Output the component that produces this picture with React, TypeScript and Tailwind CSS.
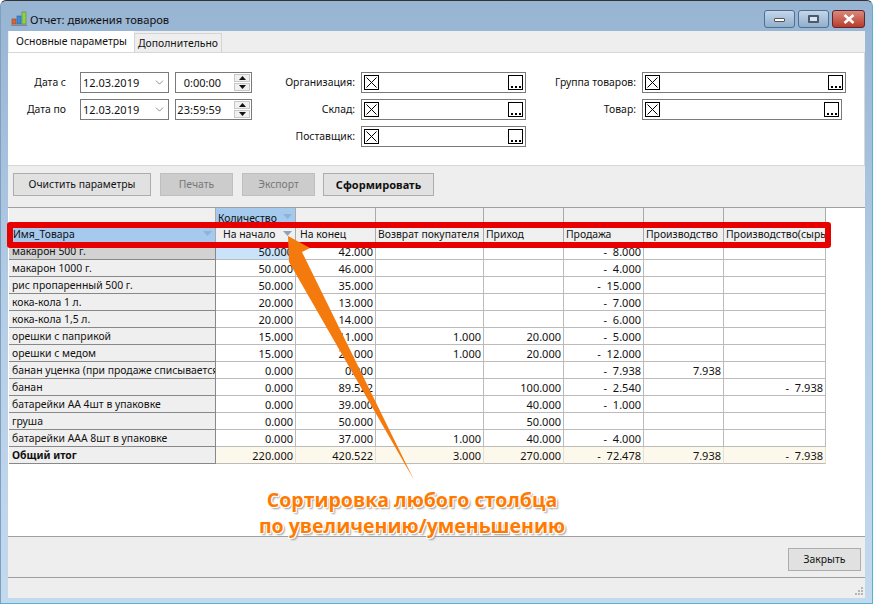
import { ChevronDown } from "lucide-react";

const widths = ["w-[207px]", "w-[80px]", "w-[80px]", "w-[108px]", "w-[80px]", "w-[80px]", "w-[80px]", "w-[102px]"];

const headers = [
  { text: "На начало", pad: "pl-[7px]" },
  { text: "На конец", pad: "pl-[4px]" },
  { text: "Возврат покупателя", pad: "pl-[2px]" },
  { text: "Приход", pad: "pl-[2px]" },
  { text: "Продажа", pad: "pl-[2px]" },
  { text: "Производство", pad: "pl-[2px]" },
  { text: "Производство(сырье)", pad: "pl-[2px]" },
];

const rows = [
  ["макарон 500 г.", "50.000", "42.000", "", "", "-  8.000", "", ""],
  ["макарон 1000 г.", "50.000", "46.000", "", "", "-  4.000", "", ""],
  ["рис пропаренный 500 г.", "50.000", "35.000", "", "", "-  15.000", "", ""],
  ["кока-кола 1 л.", "20.000", "13.000", "", "", "-  7.000", "", ""],
  ["кока-кола 1,5 л.", "20.000", "14.000", "", "", "-  6.000", "", ""],
  ["орешки с паприкой", "15.000", "11.000", "1.000", "20.000", "-  5.000", "", ""],
  ["орешки с медом", "15.000", "24.000", "1.000", "20.000", "-  12.000", "", ""],
  ["банан уценка (при продаже списывается)", "0.000", "0.000", "", "", "-  7.938", "7.938", ""],
  ["банан", "0.000", "89.522", "", "100.000", "-  2.540", "", "-  7.938"],
  ["батарейки АА 4шт в упаковке", "0.000", "39.000", "", "40.000", "-  1.000", "", ""],
  ["груша", "0.000", "50.000", "", "50.000", "", "", ""],
  ["батарейки ААА 8шт в упаковке", "0.000", "37.000", "1.000", "40.000", "-  4.000", "", ""],
];

const total = ["Общий итог", "220.000", "420.522", "3.000", "270.000", "-  72.478", "7.938", "-  7.938"];

function Lookup({ className }: { className: string }) {
  return (
    <div className={`flex h-[21px] items-center justify-between border border-[#7a7a7a] bg-white pl-[2px] pr-[2px] ${className}`}>
      <div className="h-[15px] w-[15px] border border-black">
        <svg viewBox="0 0 13 13" className="h-[13px] w-[13px]">
          <path d="M1.5 1.5L11.5 11.5M11.5 1.5L1.5 11.5" stroke="#000" strokeWidth="1" fill="none" />
        </svg>
      </div>
      <div className="relative h-[15px] w-[15px] border border-black">
        <div className="absolute bottom-[1px] left-[2px] flex gap-[2px]">
          <span className="h-[2px] w-[2px] bg-black" />
          <span className="h-[2px] w-[2px] bg-black" />
          <span className="h-[2px] w-[2px] bg-black" />
        </div>
      </div>
    </div>
  );
}

function DateBox({ value }: { value: string }) {
  return (
    <div className="flex h-[21px] w-[89px] items-center justify-between border border-[#7a7a7a] bg-white pl-[2px] pr-[2px] text-[11px]">
      <span>{value}</span>
      <ChevronDown size={13} strokeWidth={1} color="#333" />
    </div>
  );
}

function TimeBox({ value }: { value: string }) {
  return (
    <div className="flex h-[21px] w-[77px] items-center justify-between border border-[#7a7a7a] bg-white pr-[1px] text-[11px]">
      <span className="flex-1 pr-[13px] text-right">{value}</span>
      <div className="flex flex-col gap-[1px]">
        {["M0 4L3.5 0L7 4Z", "M0 0L7 0L3.5 4Z"].map((d) => (
          <div key={d} className="flex h-[8px] w-[16px] items-center justify-center border border-[#c8c8c8] bg-[#f0f0f0]">
            <svg width="7" height="4" viewBox="0 0 7 4">
              <path d={d} fill="#111" />
            </svg>
          </div>
        ))}
      </div>
    </div>
  );
}

function Label({ text, className }: { text: string; className: string }) {
  return <span className={`whitespace-nowrap text-right ${className}`}>{text}</span>;
}

function SortMark({ dark }: { dark?: boolean }) {
  return (
    <svg width="9" height="5" viewBox="0 0 9 5" className="absolute right-[3px] top-[6px]">
      <path d="M0 0L9 0L4.5 5Z" fill={dark ? "#8fa3b8" : "#8db3dc"} />
    </svg>
  );
}

export default function App() {
  return (
    <div
      className="flex h-[604px] w-[873px] flex-col overflow-hidden rounded-t-[6px] border border-[#333] border-r-[#55b4d4] border-b-[#55b4d4] border-l-[#7f9fbf] bg-gradient-to-b from-[#97b4d3] via-[#b4cde6] to-[#c3d9ee] px-[7px] pb-[5px] text-[10.4px] leading-none text-[#111]"
      style={{ fontFamily: "'Noto Sans', sans-serif" }}
    >
      {/* TITLE BAR */}
      <div className="flex h-[30px] shrink-0 items-center">
        <svg width="16" height="16" viewBox="0 0 16 16" className="ml-[3px] mt-[4px]">
          <rect x="1" y="9" width="4" height="5" fill="#e2622c" stroke="#8c4a2a" strokeWidth="0.6" />
          <rect x="6" y="6" width="4" height="8" fill="#3d8bd8" stroke="#2c5f94" strokeWidth="0.6" />
          <rect x="11" y="2" width="4" height="12" fill="#8ed14a" stroke="#55862c" strokeWidth="0.6" />
          <rect x="0" y="14.5" width="16" height="1.5" fill="#7d8a96" />
        </svg>
        <span className="ml-[3px] mt-[8px] text-[11.2px] text-[#111]">Отчет: движения товаров</span>
        <div className="ml-auto mt-[5px] flex gap-[3px]">
          <div className="flex h-[18px] w-[31px] items-center justify-center rounded-[3px] border border-[#4f6f92] bg-gradient-to-b from-[#c4d6ea] to-[#92aecb]">
            <span className="mt-[3px] h-[4px] w-[11px] rounded-[1px] border border-[#555] bg-white" />
          </div>
          <div className="flex h-[18px] w-[31px] items-center justify-center rounded-[3px] border border-[#4f6f92] bg-gradient-to-b from-[#c4d6ea] to-[#92aecb]">
            <span className="h-[8px] w-[11px] rounded-[1px] border-2 border-[#4a5a6c] bg-[#d8e4f0]" />
          </div>
          <div className="flex h-[18px] w-[33px] items-center justify-center rounded-[3px] border border-[#5c2730] bg-gradient-to-b from-[#d9887c] to-[#b83a28]">
            <svg width="12" height="10" viewBox="0 0 12 10">
              <path d="M1.5 1L10.5 9M10.5 1L1.5 9" stroke="#fff" strokeWidth="2.6" fill="none" />
            </svg>
          </div>
        </div>
      </div>

      {/* CLIENT AREA */}
      <div className="relative flex min-h-0 flex-1 flex-col bg-[#eeeeee]">
        {/* TABS */}
        <div className="flex h-[21px] shrink-0 items-end pl-[1px]">
          <div className="z-10 flex h-[21px] w-[125px] items-center justify-center bg-white">Основные параметры</div>
          <div className="flex h-[19px] w-[88px] items-center justify-center border border-b-0 border-[#d4d4d4] bg-[#eeeeee]">Дополнительно</div>
        </div>

        {/* PARAMETERS */}
        <div className="h-[114px] shrink-0 border-y border-r border-[#d8d8d8] bg-white pl-[15px] pt-[19px]">
          <div className="flex">
            <div className="flex w-[229px] flex-col gap-[6px]">
              <div className="flex h-[21px] items-center">
                <Label text="Дата с" className="w-[43px]" />
                <div className="ml-[14px]"><DateBox value="12.03.2019" /></div>
                <div className="ml-[6px] shrink-0"><TimeBox value="0:00:00" /></div>
              </div>
              <div className="flex h-[21px] items-center">
                <Label text="Дата по" className="w-[43px]" />
                <div className="ml-[14px]"><DateBox value="12.03.2019" /></div>
                <div className="ml-[6px] shrink-0"><TimeBox value="23:59:59" /></div>
              </div>
            </div>
            <div className="ml-[31px] flex flex-col gap-[6px]">
              {["Организация:", "Склад:", "Поставщик:"].map((t) => (
                <div key={t} className="flex h-[21px] items-center">
                  <Label text={t} className="w-[72px]" />
                  <Lookup className="ml-[6px] w-[165px]" />
                </div>
              ))}
            </div>
            <div className="ml-[22px] flex flex-col gap-[6px]">
              <div className="flex h-[21px] items-center">
                <Label text="Группа товаров:" className="w-[88px]" />
                <Lookup className="ml-[6px] w-[204px]" />
              </div>
              <div className="flex h-[21px] items-center">
                <Label text="Товар:" className="w-[88px]" />
                <Lookup className="ml-[6px] w-[200px]" />
              </div>
            </div>
          </div>
        </div>

        {/* TOOLBAR */}
        <div className="flex h-[41px] shrink-0 items-center gap-[8px] pb-[4px] pl-[5px]">
          <button className="h-[23px] w-[138px] border border-[#adadad] bg-[#e1e1e1]">Очистить параметры</button>
          <button className="ml-[1px] h-[23px] w-[73px] border border-[#bfbfbf] bg-[#cccccc] text-[#777]">Печать</button>
          <button className="ml-[1px] h-[23px] w-[73px] border border-[#bfbfbf] bg-[#cccccc] text-[#777]">Экспорт</button>
          <button className="h-[23px] w-[111px] border border-[#adadad] bg-[#e1e1e1] text-[11px] font-bold">Сформировать</button>
        </div>

        {/* GRID */}
        <div className="h-[330px] shrink-0 border-y border-[#a0a0a0] bg-white pl-[1px]">
          <div className="w-[817px]">
            <div className="flex h-[17px] bg-[#f0f0f0]">
              <div className="h-full w-[207px] border-r border-[#aaa]" />
              <div className="relative h-full w-[80px] border-r border-[#aaa] bg-[#a6c9ee] pl-[2px] pt-[5px]">
                Количество
                <SortMark />
              </div>
              {widths.slice(2).map((w, i) => (
                <div key={i} className={`h-full border-r border-[#aaa] ${w}`} />
              ))}
            </div>
            <div className="flex h-[18px] border-b border-[#aaa] bg-[#f0f0f0]">
              <div className="relative flex w-[207px] items-center border-r border-[#aaa] bg-[#a6c9ee] pl-[4px] pt-[1px]">
                Имя_Товара
                <SortMark />
              </div>
              {headers.map((h, i) => (
                <div key={h.text} className={`relative flex items-center overflow-hidden whitespace-nowrap border-r border-[#aaa] pt-[1px] ${widths[i + 1]} ${h.pad}`}>
                  {h.text}
                  {i === 0 && <SortMark dark />}
                </div>
              ))}
            </div>
            {rows.map((r, ri) => (
              <div key={ri} className="flex h-[17px]">
                {r.map((c, ci) => (
                  <div
                    key={ci}
                    className={`flex items-center overflow-hidden whitespace-pre border-b border-r ${widths[ci]} ${
                      ci === 0
                        ? `border-[#888] pl-[3px] ${ri === 0 ? "bg-[#d2d2d2]" : "bg-[#efefef]"}`
                        : `justify-end border-[#bbb] pr-[2px] text-[11px] ${ri === 0 && ci === 1 ? "bg-[#c9e3fb]" : ""}`
                    }`}
                  >
                    {c}
                  </div>
                ))}
              </div>
            ))}
            <div className="flex h-[17px]">
              {total.map((c, ci) => (
                <div
                  key={ci}
                  className={`flex items-center whitespace-pre border-b border-r ${widths[ci]} ${
                    ci === 0 ? "border-[#888] bg-[#efefef] pl-[3px] font-bold" : "justify-end border-b-[#bbb] border-r-[#e4e0d4] bg-[#fdf8ec] pr-[2px] text-[11px]"
                  }`}
                >
                  {c}
                </div>
              ))}
            </div>
          </div>
        </div>

        {/* FOOTER */}
        <div className="flex h-[41px] shrink-0 items-center justify-end border-b border-[#a0a0a0] pr-[4px] pt-[4px]">
          <button className="h-[23px] w-[73px] border border-[#adadad] bg-[#e1e1e1]">Закрыть</button>
        </div>
        <div className="relative min-h-0 flex-1">
          <svg width="10" height="10" viewBox="0 0 10 10" className="absolute bottom-[1px] right-[1px]">
            <path d="M7 0h2v2H7zM4 3h2v2H4zM7 3h2v2H7zM1 6h2v2H1zM4 6h2v2H4zM7 6h2v2H7z" fill="#b5b5b5" />
          </svg>
        </div>

        {/* ANNOTATION */}
        <div className="absolute left-[-1px] top-[191px] h-[26px] w-[824px] rounded-[3px] border-[6px] border-[#e60000]" />
        <svg width="873" height="604" viewBox="0 0 873 604" className="pointer-events-none absolute left-[-8px] top-[-31px]">
          <path d="M288 236L310 248L302 252L414 480L289 262Z" fill="#f47a0e" />
        </svg>
        <div
          className="absolute left-[189px] top-[456px] w-[430px] whitespace-nowrap text-center text-[19.5px] font-bold leading-[26px] text-[#ff7a00]"
          style={{ fontFamily: "'Open Sans', sans-serif", textShadow: "1px 1px 0 #fff, -1px -1px 0 #fff, 1px -1px 0 #fff, -1px 1px 0 #fff, 2px 2px 2px #999" }}
        >
          Сортировка любого столбца
          <br />
          по увеличению/уменьшению
        </div>
      </div>
    </div>
  );
}
